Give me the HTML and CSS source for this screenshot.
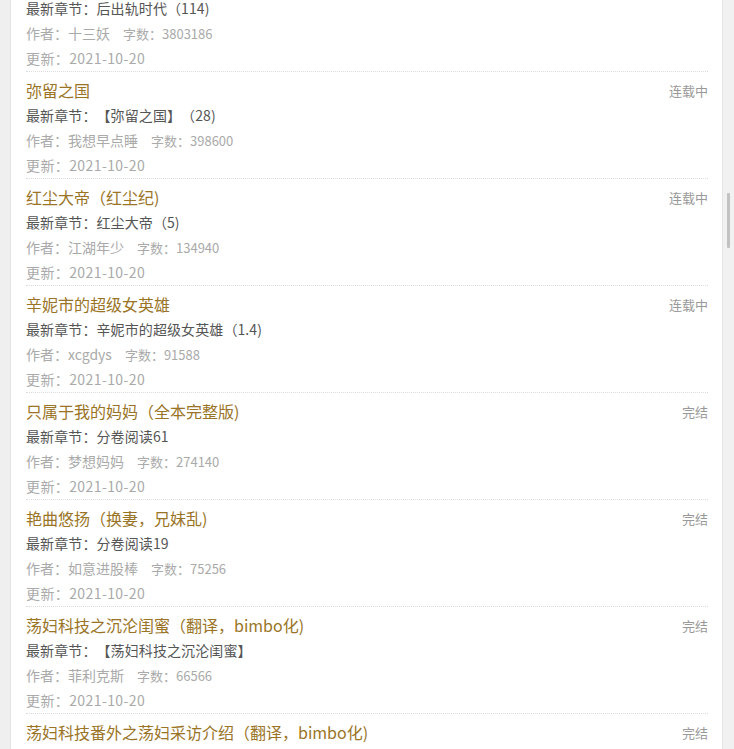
FILE: index.html
```html
<!DOCTYPE html>
<html lang="zh-CN">
<head>
<meta charset="utf-8">
<title>书单</title>
<link rel="stylesheet" href="styles.css">
</head>
<body>
<div class="frame">
  <div class="gutter"></div>
  <main class="panel">
    <ul class="list">
      <li class="item">
        <div class="head"><a class="title">后出轨时代</a><span class="status">连载中</span></div>
        <div class="chapter">最新章节：后出轨时代（114)</div>
        <div class="meta">作者：十三妖<span class="words">字数：3803186</span></div>
        <div class="date">更新：2021-10-20</div>
      </li>
      <li class="item">
        <div class="head"><a class="title">弥留之国</a><span class="status">连载中</span></div>
        <div class="chapter">最新章节：【弥留之国】（28)</div>
        <div class="meta">作者：我想早点睡<span class="words">字数：398600</span></div>
        <div class="date">更新：2021-10-20</div>
      </li>
      <li class="item">
        <div class="head"><a class="title">红尘大帝（红尘纪)</a><span class="status">连载中</span></div>
        <div class="chapter">最新章节：红尘大帝（5)</div>
        <div class="meta">作者：江湖年少<span class="words">字数：134940</span></div>
        <div class="date">更新：2021-10-20</div>
      </li>
      <li class="item">
        <div class="head"><a class="title">辛妮市的超级女英雄</a><span class="status">连载中</span></div>
        <div class="chapter">最新章节：辛妮市的超级女英雄（1.4)</div>
        <div class="meta">作者：xcgdys<span class="words">字数：91588</span></div>
        <div class="date">更新：2021-10-20</div>
      </li>
      <li class="item">
        <div class="head"><a class="title">只属于我的妈妈（全本完整版)</a><span class="status">完结</span></div>
        <div class="chapter">最新章节：分卷阅读61</div>
        <div class="meta">作者：梦想妈妈<span class="words">字数：274140</span></div>
        <div class="date">更新：2021-10-20</div>
      </li>
      <li class="item">
        <div class="head"><a class="title">艳曲悠扬（换妻，兄妹乱)</a><span class="status">完结</span></div>
        <div class="chapter">最新章节：分卷阅读19</div>
        <div class="meta">作者：如意进股棒<span class="words">字数：75256</span></div>
        <div class="date">更新：2021-10-20</div>
      </li>
      <li class="item">
        <div class="head"><a class="title">荡妇科技之沉沦闺蜜（翻译，bimbo化)</a><span class="status">完结</span></div>
        <div class="chapter">最新章节：【荡妇科技之沉沦闺蜜】</div>
        <div class="meta">作者：菲利克斯<span class="words">字数：66566</span></div>
        <div class="date">更新：2021-10-20</div>
      </li>
      <li class="item">
        <div class="head"><a class="title">荡妇科技番外之荡妇采访介绍（翻译，bimbo化)</a><span class="status">完结</span></div>
        <div class="chapter">最新章节：荡妇科技番外之荡妇采访介绍</div>
        <div class="meta">作者：菲利克斯<span class="words">字数：12000</span></div>
        <div class="date">更新：2021-10-20</div>
      </li>
    </ul>
  </main>
  <div class="track"><div class="thumb"></div></div>
</div>
</body>
</html>
```

FILE: styles.css
```css
* { box-sizing: border-box; }
html, body {
  margin: 0;
  padding: 0;
  height: 100%;
  overflow: hidden;
  background: #f2f2f2;
  font-family: "Noto Sans CJK SC", "Noto Sans", sans-serif;
  text-spacing-trim: space-all;
}
.frame {
  display: flex;
  height: 749px;
  overflow: hidden;
}
.gutter {
  width: 11px;
  flex: none;
  background: #efefef;
  border-right: 1px solid #e4e4e4;
}
.panel {
  flex: 1;
  background: #fff;
  border-right: 1px solid #e4e4e4;
  padding: 0 14px 0 15px;
  overflow: hidden;
}
.track {
  width: 11px;
  flex: none;
  background: #f1f1f1;
  padding-top: 193px;
  display: flex;
  justify-content: center;
}
.thumb {
  width: 3px;
  height: 55px;
  background: #c2c2c2;
  border-radius: 1px;
}
.list {
  list-style: none;
  margin: -35px 0 0 0;
  padding: 0;
}
.item {
  padding: 6px 0 0 0;
  border-bottom: 1px dotted #dcdcdc;
  height: 107px;
}
.head {
  display: flex;
  justify-content: space-between;
  align-items: center;
  height: 25px;
}
.title {
  color: #9a7426;
  font-size: 16px;
  text-decoration: none;
  line-height: 25px;
}
.status {
  color: #999;
  font-size: 13px;
  line-height: 25px;
}
.chapter {
  color: #555;
  font-size: 14px;
  line-height: 25px;
  height: 25px;
  letter-spacing: 0.1px;
}
.meta {
  color: #aaa;
  font-size: 14px;
  line-height: 25px;
  height: 25px;
}
.words {
  margin-left: 13px;
  font-size: 13px;
}
.date {
  color: #aaa;
  font-size: 14px;
  line-height: 25px;
  height: 25px;
  letter-spacing: 0.4px;
}
```
